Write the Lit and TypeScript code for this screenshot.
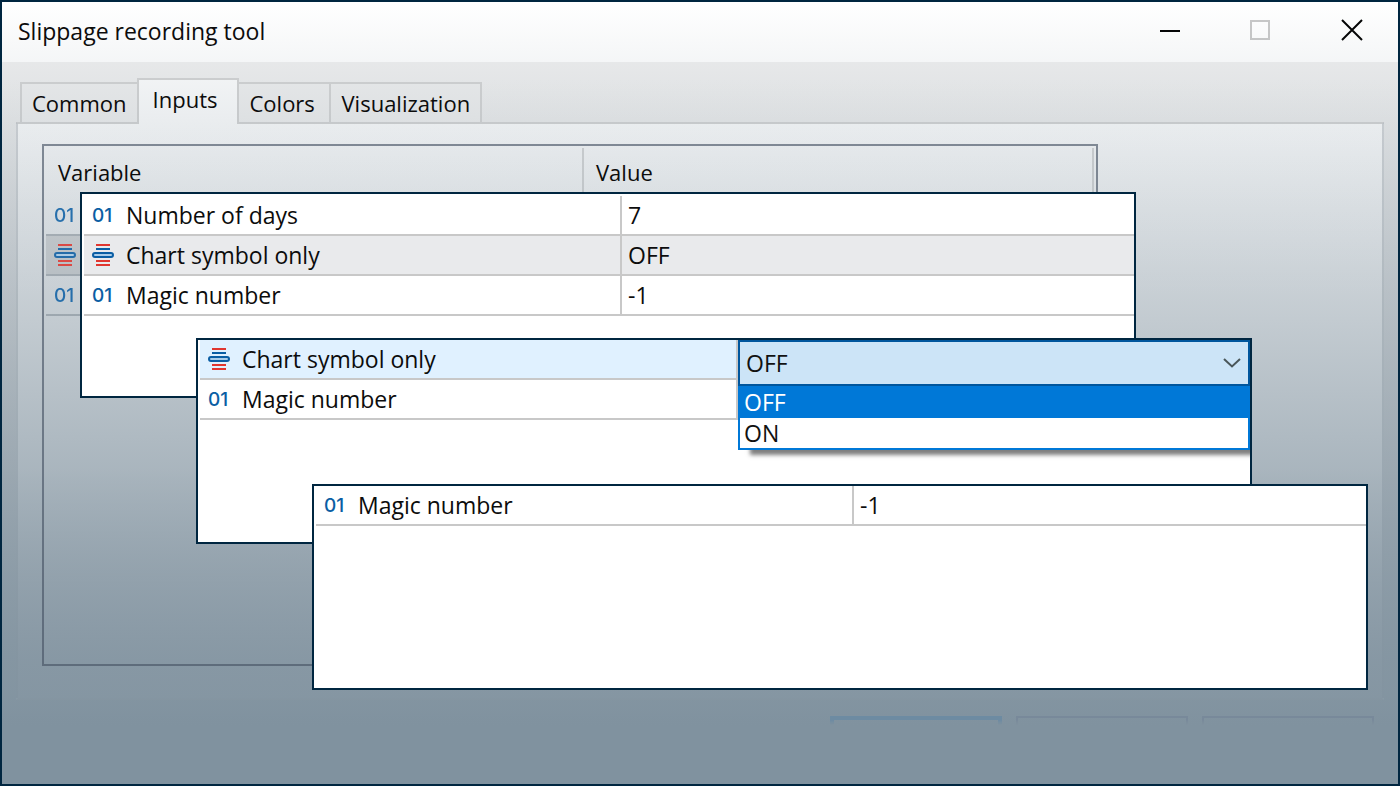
import { LitElement, html, css, svg, nothing } from "lit";
import { customElement, property, state } from "lit/decorators.js";
import { classMap } from "lit/directives/class-map.js";

type Kind = "number" | "enum";
interface Input {
  kind: Kind;
  name: string;
  value: string;
  selected?: boolean;
  editing?: boolean;
}

const DAYS: Input = { kind: "number", name: "Number of days", value: "7" };
const SYMBOL: Input = { kind: "enum", name: "Chart symbol only", value: "OFF" };
const MAGIC: Input = { kind: "number", name: "Magic number", value: "-1" };

/** Small glyph in front of a variable, showing its data type. */
@customElement("type-icon")
class TypeIcon extends LitElement {
  @property() kind: Kind = "number";

  static styles = css`
    :host {
      position: relative;
      z-index: 2;
      display: flex;
      align-items: center;
      width: 22px;
      height: 22px;
      flex: none;
      opacity: var(--icon-opacity, 1);
    }
    .digits {
      padding-top: 2px;
      font: 500 19px/22px Inter, "Open Sans", sans-serif;
      color: #0a5ea4;
    }
    .bars {
      display: block;
    }
  `;

  render() {
    if (this.kind === "number") return html`<span class="digits">01</span>`;
    return html`<svg class="bars" width="22" height="22" viewBox="0 0 22 22" aria-hidden="true">
      <path d="M4 1h14M4 17h14M4 21h14" stroke="#e0362f" stroke-width="2" />
      <path d="M4 5h14" stroke="#0a5ea4" stroke-width="2" />
      <rect x="1" y="9" width="20" height="4" rx="2" fill="#a9cdea" stroke="#0a5ea4" stroke-width="2" />
    </svg>`;
  }
}

/** Drop-down editor with its option list opened. */
@customElement("value-combo")
class ValueCombo extends LitElement {
  @state() private value = "OFF";
  private options = ["OFF", "ON"];

  static styles = css`
    :host {
      display: block;
    }
    .field {
      display: flex;
      position: relative;
    }
    .select {
      appearance: none;
      width: 100%;
      height: 46px;
      margin: 0;
      padding: 0 6px;
      border: 2px solid #00569d;
      border-radius: 0;
      outline: none;
      background: #cce4f7;
      color: #111;
      font: inherit;
    }
    .arrow {
      position: absolute;
      right: 9px;
      top: 17px;
      pointer-events: none;
    }
    .list {
      list-style: none;
      margin: 0;
      padding: 0;
      border: 2px solid #0078d7;
      border-top: 0;
      background: #fff;
      box-shadow: 12px 5px 4px 0 rgba(0, 0, 0, 0.5);
      clip-path: inset(0 0 -12px 0);
    }
    .option {
      display: block;
      width: 100%;
      height: 30px;
      padding: 0 4px;
      border: 0;
      background: none;
      text-align: left;
      color: #111;
      font: inherit;
      line-height: 30px;
    }
    .option.active {
      height: 32px;
      background: #0078d7;
      color: #fff;
    }
  `;

  render() {
    return html`
      <div class="field">
        <select
          class="select"
          aria-label="Chart symbol only"
          .value=${this.value}
          @change=${(e: Event) => (this.value = (e.target as HTMLSelectElement).value)}
        >
          ${this.options.map((o) => html`<option ?selected=${o === this.value}>${o}</option>`)}
        </select>
        <svg class="arrow" width="18" height="12" viewBox="0 0 18 12" aria-hidden="true">
          <path d="M1 2L9 9.500L17 2" fill="none" stroke="#4a5659" stroke-width="2" />
        </svg>
      </div>
      <ul class="list">
        ${this.options.map(
          (o) => html`<li>
            <button
              class=${classMap({ option: true, active: o === this.value })}
              @click=${() => (this.value = o)}
            >${o}</button>
          </li>`
        )}
      </ul>
    `;
  }
}

/** Grid of input variables; the header row is optional. */
@customElement("input-grid")
class InputGrid extends LitElement {
  @property({ attribute: false }) rows: Input[] = [];
  @property({ type: Boolean }) header = false;

  static styles = css`
    :host {
      display: block;
      box-sizing: border-box;
    }
    .grid {
      width: 100%;
      table-layout: fixed;
      border-collapse: separate;
      border-spacing: 0;
    }
    .name-col {
      width: 538px;
    }
    .cell,
    .head {
      box-sizing: border-box;
      height: 40px;
      padding: 0 6px;
      border-bottom: 2px solid var(--line, #c8c8c8);
      text-align: left;
      font-weight: 400;
      line-height: 30px;
      white-space: nowrap;
    }
    .head {
      height: 48px;
      padding: 0 12px;
      border-bottom: 0;
      border-right: 2px solid #d8d8d8;
    }
    .caption {
      position: relative;
      z-index: 2;
      font-size: 22px;
    }
    .name {
      padding: 0 8px;
      border-right: 2px solid #c8c8c8;
    }
    .label {
      display: flex;
      align-items: center;
      gap: 12px;
    }
    .selected .cell {
      background: var(--selected, #e9eaec);
    }
    .editing .name {
      background: #e0f1ff;
    }
    .editing .value {
      position: relative;
      padding: 0;
    }
    .combo {
      position: absolute;
      inset: 0 0 auto 0;
      z-index: 1;
    }
  `;

  render() {
    return html`<table class="grid">
      <colgroup>
        <col class="name-col" />
        <col />
      </colgroup>
      ${this.header
        ? html`<thead>
            <tr>
              <th class="head"><span class="caption">Variable</span></th>
              <th class="head"><span class="caption">Value</span></th>
            </tr>
          </thead>`
        : nothing}
      <tbody>
        ${this.rows.map(
          (r) => html`<tr class=${classMap({ selected: !!r.selected, editing: !!r.editing })}>
            <td class="cell name">
              <div class="label"><type-icon kind=${r.kind}></type-icon>${r.name}</div>
            </td>
            <td class="cell value">
              ${r.editing ? html`<value-combo class="combo"></value-combo>` : r.value}
            </td>
          </tr>`
        )}
      </tbody>
    </table>`;
  }
}

@customElement("app-root")
class AppRoot extends LitElement {
  @state() private tab = "Inputs";

  static styles = css`
    :host {
      display: block;
      font: 23px/30px "Open Sans", "Noto Sans", sans-serif;
      color: #0c0c0c;
    }
    .window {
      position: relative;
      display: flex;
      flex-direction: column;
      box-sizing: border-box;
      min-height: 100vh;
      border: 2px solid #002640;
      background: linear-gradient(#f0f0f0 10%, #d0d2d4 60%, #a0acb4 88%, #8092a0 93%);
    }
    /* Shade that deepens towards the bottom of the dialog */
    .window::after {
      content: "";
      position: absolute;
      inset: 0;
      z-index: 1;
      pointer-events: none;
      background: linear-gradient(
        rgba(128, 146, 159, 0),
        rgba(128, 146, 159, 0.67) 61%,
        rgba(128, 146, 159, 0.88) 84%,
        rgba(128, 146, 159, 0.9) 91%,
        rgb(128, 146, 159) 93%
      );
    }
    .titlebar {
      display: flex;
      height: 60px;
      padding-left: 16px;
      background: #fff;
    }
    .title {
      position: relative;
      z-index: 2;
      flex: 1;
      margin: 0;
      font: inherit;
      line-height: 58px;
    }
    .control {
      display: grid;
      place-items: center;
      width: 92px;
      height: 56px;
      padding: 0;
      border: 0;
      background: none;
      color: #000;
    }
    .tabs {
      display: flex;
      align-items: flex-end;
      margin: 16px 18px 0;
      height: 46px;
    }
    .tab {
      box-sizing: border-box;
      height: 42px;
      min-width: 94px;
      margin-right: -2px;
      padding: 0 10px;
      border: 2px solid #d4d4d4;
      background: #f0f0f0;
      color: inherit;
      font: inherit;
      font-size: 22px;
      line-height: 30px;
      text-align: left;
    }
    .tab.active {
      position: relative;
      height: 46px;
      padding: 0 20px 6px 14px;
      border-bottom: 0;
      background: #fff;
    }
    .caption {
      position: relative;
      z-index: 2;
    }
    .page {
      flex: 1;
      display: flex;
      box-sizing: border-box;
      margin: -2px 14px 0;
      padding: 20px 24px 32px;
      border: 2px solid;
      border-color: #d4d4d4 rgba(112, 120, 128, 0.3) rgba(90, 100, 110, 0.5);
      background: linear-gradient(#fff, #f9f9f9 30%, #f9f9f9 60%, #b0b8c0);
    }
    .base {
      position: relative;
      flex: 1;
      margin-right: 260px;
      padding: 4px;
      --selected: #dcdcdc;
      --line: #b4b8bc;
      --icon-opacity: 0.85;
    }
    .base::after {
      content: "";
      position: absolute;
      inset: 0;
      z-index: 2;
      border: 2px solid rgba(72, 84, 102, 0.65);
      pointer-events: none;
    }
    .footer {
      display: flex;
      justify-content: flex-end;
      gap: 14px;
      box-sizing: border-box;
      height: 84px;
      padding: 16px 24px;
    }
    /* Buttons sink into the shade a few pixels below their top edge */
    .action {
      position: relative;
      z-index: 2;
      width: 172px;
      height: 46px;
      border: 2px solid #78899a;
      background: none;
      mask-image: linear-gradient(#000 4px, transparent 9px);
    }
    .action.default {
      border: 4px solid #6d8ba2;
    }
    /* Close-up cards stacked over the dialog */
    .card {
      position: absolute;
      z-index: 3;
      height: 206px;
      padding-left: 2px;
      border: 2px solid #002640;
      background: #fff;
    }
    .first {
      inset: 190px 262px auto 78px;
      padding-top: 2px;
    }
    .second {
      inset: 336px 146px auto 194px;
    }
    .third {
      inset: 482px 30px auto 310px;
    }
  `;

  private controls = [
    { label: "Minimize", art: svg`<path d="M4 13h20" stroke="#000" stroke-width="2"/>` },
    { label: "Maximize", art: svg`<path d="M3 3h18v18H3z" fill="none" stroke="#c8c8c8" stroke-width="2"/>` },
    { label: "Close", art: svg`<path d="M2 2L22 22M22 2L2 22" stroke="#000" stroke-width="2"/>` },
  ];

  render() {
    const unnamed = (r: Input): Input => ({ ...r, name: "", value: "" });
    return html`<main class="window">
      <header class="titlebar">
        <h1 class="title">Slippage recording tool</h1>
        ${this.controls.map(
          (c) => html`<button class="control" aria-label=${c.label}>
            <svg width="24" height="24" viewBox="0 0 24 24">${c.art}</svg>
          </button>`
        )}
      </header>
      <nav class="tabs">
        ${["Common", "Inputs", "Colors", "Visualization"].map(
          (t) => html`<button
            class=${classMap({ tab: true, active: t === this.tab })}
            @click=${() => (this.tab = t)}
          ><span class="caption">${t}</span></button>`
        )}
      </nav>
      <section class="page">
        <input-grid
          class="base"
          header
          .rows=${[unnamed(DAYS), { ...unnamed(SYMBOL), selected: true }, unnamed(MAGIC)]}
        ></input-grid>
      </section>
      <footer class="footer">
        <button class="action default" aria-label="OK"></button>
        <button class="action" aria-label="Cancel"></button>
        <button class="action" aria-label="Reset"></button>
      </footer>
      <input-grid class="card first" .rows=${[DAYS, { ...SYMBOL, selected: true }, MAGIC]}></input-grid>
      <input-grid
        class="card second"
        .rows=${[{ ...SYMBOL, editing: true }, { ...MAGIC, value: "" }]}
      ></input-grid>
      <input-grid class="card third" .rows=${[MAGIC]}></input-grid>
    </main>`;
  }
}
